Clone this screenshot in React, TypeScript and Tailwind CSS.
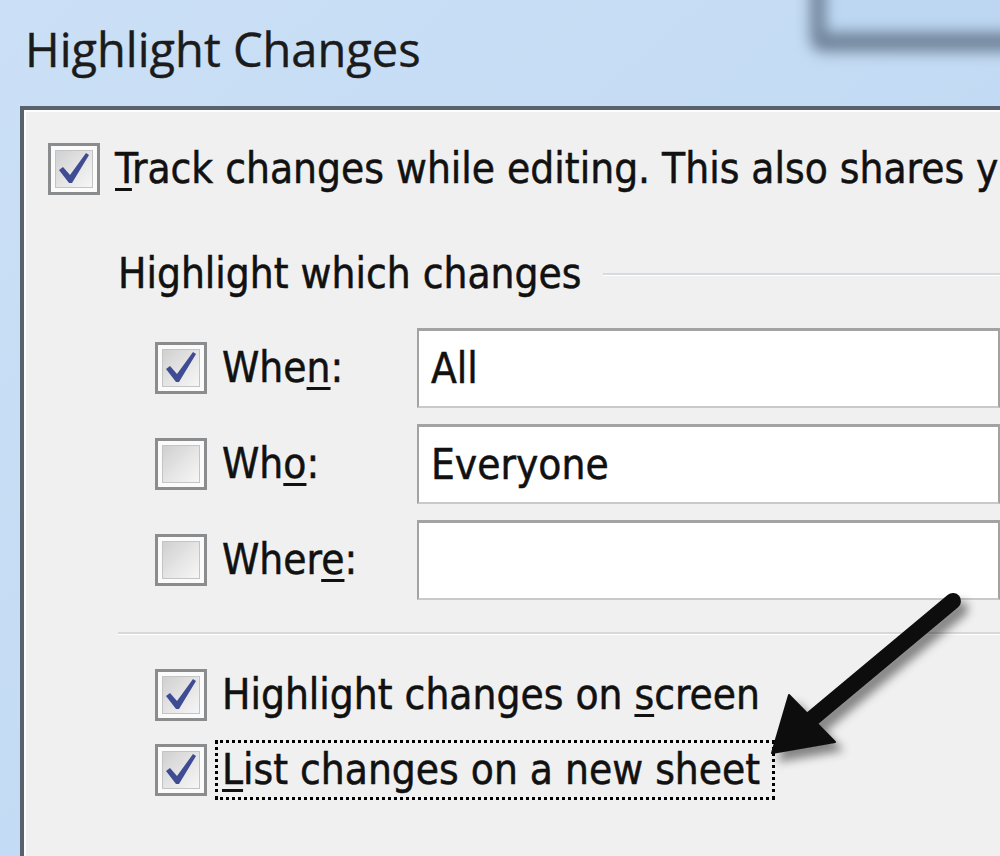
import React from 'react';

const BODY_FONT = "[font-family:'DejaVu_Sans_Condensed','DejaVu_Sans',sans-serif]";
const TEXT = 'text-[42px] leading-[42px] [-webkit-text-stroke:0.5px_#111]';

function Checkbox({ checked }: { checked?: boolean }) {
  return (
    <div className="relative h-[52px] w-[52px] shrink-0 border-[3px] border-[#8b8c8d] bg-[#fbfbfb] p-[4px]">
      <div className="h-full w-full border border-[#c4c4c4] bg-gradient-to-br from-[#d0d0d0] via-[#e4e4e4] to-[#f6f6f6]" />
      {checked && (
        <svg className="absolute left-[-3px] top-[-3px] h-[52px] w-[52px]" viewBox="0 0 52 52">
          <polygon points="11,27 15,24 22,32 38,10 41,12 24,40 21,40" fill="#3f4c94" />
        </svg>
      )}
    </div>
  );
}

function Underlined({ text, at }: { text: string; at: number }) {
  return (
    <>
      {text.slice(0, at)}
      <span className="underline decoration-[3px] underline-offset-[5px]">{text[at]}</span>
      {text.slice(at + 1)}
    </>
  );
}

function FieldRow({ label, at, value, checked }: { label: string; at: number; value: string; checked?: boolean }) {
  return (
    <div className="flex h-[80px] items-center">
      <Checkbox checked={checked} />
      <div className={`ml-[15px] w-[195px] ${TEXT}`}>
        <Underlined text={label} at={at} />
      </div>
      <div className={`flex h-full flex-1 items-center border-2 border-t-[3px] border-[#a3a3a3] border-b-[#c9c9c9] bg-white pl-[12px] ${TEXT}`}>
        {value}
      </div>
    </div>
  );
}

export default function App() {
  return (
    <div className={`relative h-[856px] w-[1000px] overflow-hidden bg-gradient-to-br from-[#cbe0f6] to-[#bcd6f2] text-[#111] ${BODY_FONT}`}>
      {/* shadow of the window behind, top right */}
      <div className="absolute left-[810px] top-[-40px] h-[92px] w-[240px] rounded-bl-[14px] border-b-[20px] border-l-[16px] border-[#71859b] bg-[#bdd7f2] blur-[7px]" />

      <div className="relative flex h-full flex-col">
        <h1 className="h-[106px] pl-[25px] pt-[26px] text-[47px] font-normal leading-[46px] text-[#1b1b1b] [-webkit-text-stroke:0.4px_#1b1b1b] [font-family:'Open_Sans','Noto_Sans',sans-serif]">
          Highlight Changes
        </h1>

        <div className="ml-[20px] flex-1 border-l-4 border-t-4 border-[#58626d] bg-[#f0f0f0] shadow-[inset_2px_2px_0_#fdfdfd]">
          {/* Track changes */}
          <div className="ml-[24px] mt-[33px] flex h-[52px] items-center">
            <Checkbox checked />
            <div className={`ml-[15px] whitespace-nowrap ${TEXT}`}>
              <Underlined text="Track changes while editing. This also shares your workbook." at={0} />
            </div>
          </div>

          {/* Highlight which changes */}
          <div className="ml-[94px] mt-[59px] flex h-[40px] items-center">
            <span className={`whitespace-nowrap ${TEXT}`}>Highlight which changes</span>
            <div className="ml-[22px] h-[3px] flex-1 border-t-2 border-[#d6dbe0] bg-white" />
          </div>

          <div className="ml-[131px] mt-[34px] flex flex-col gap-[16px]">
            <FieldRow label="When:" at={3} value="All" checked />
            <FieldRow label="Who:" at={2} value="Everyone" />
            <FieldRow label="Where:" at={4} value="" />
          </div>

          <div className="ml-[94px] mt-[32px] h-[3px] border-t-2 border-[#d8d8d8] bg-white" />

          <div className="ml-[131px] mt-[34px] flex flex-col gap-[23px]">
            <div className="flex h-[52px] items-center">
              <Checkbox checked />
              <div className={`ml-[15px] whitespace-nowrap ${TEXT}`}>
                <Underlined text="Highlight changes on screen" at={21} />
              </div>
            </div>
            <div className="flex h-[52px] items-center">
              <Checkbox checked />
              <div className={`ml-[8px] whitespace-nowrap border-[3px] border-dotted border-black py-[6px] pl-[4px] pr-[12px] ${TEXT}`}>
                <Underlined text="List changes on a new sheet" at={0} />
              </div>
            </div>
          </div>
        </div>
      </div>

      {/* callout arrow */}
      <svg className="absolute left-[740px] top-[570px] h-[220px] w-[260px]" viewBox="740 570 260 220">
        <defs>
          <filter id="arrowShadow" x="-30%" y="-30%" width="160%" height="160%">
            <feDropShadow dx="7" dy="8" stdDeviation="5" floodColor="#000" floodOpacity="0.45" />
          </filter>
        </defs>
        <g filter="url(#arrowShadow)" fill="#0d0d0d" stroke="#0d0d0d">
          <line x1="953" y1="601" x2="802" y2="727" strokeWidth="16" strokeLinecap="round" />
          <polygon points="772,753 789,695 835,742" strokeWidth="2" strokeLinejoin="round" />
        </g>
      </svg>
    </div>
  );
}
